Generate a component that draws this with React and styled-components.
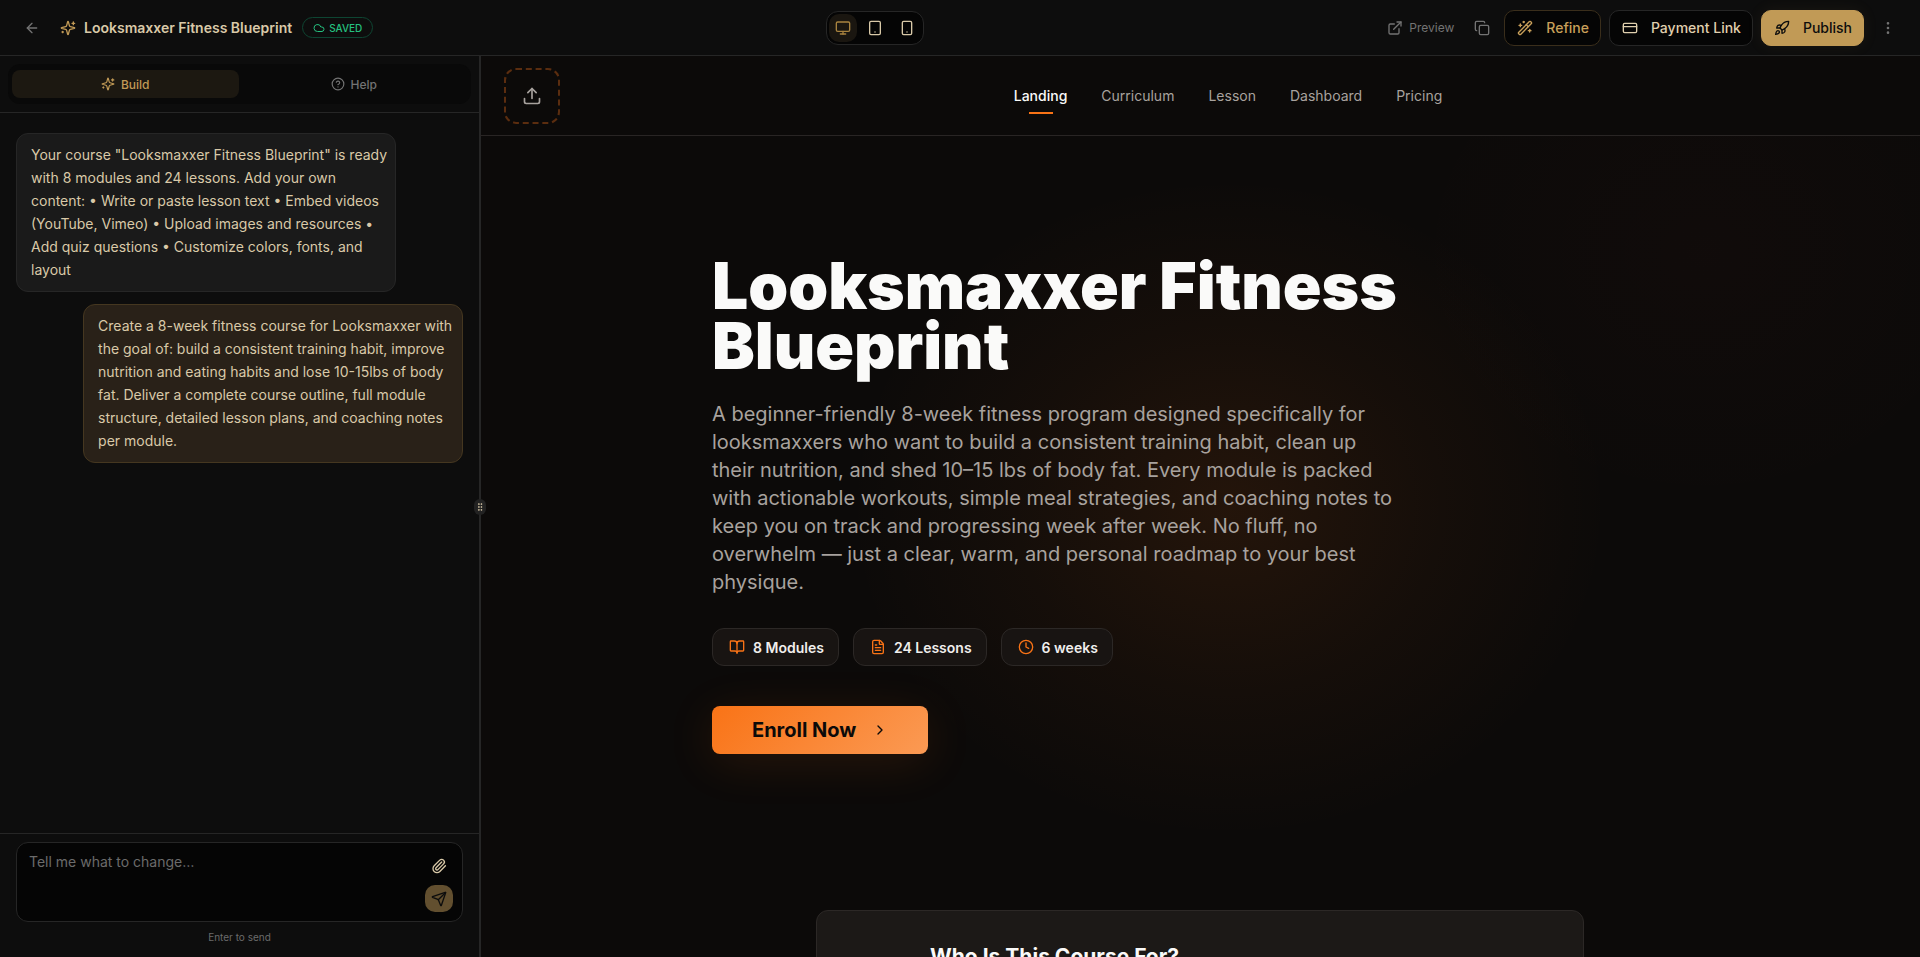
import React from 'react'
import styled, { createGlobalStyle } from 'styled-components'
import {
    ArrowLeft, Cloud, Monitor, Tablet, Smartphone, ExternalLink, Copy, WandSparkles,
    CreditCard, Rocket, EllipsisVertical, CircleQuestionMark, Paperclip, Send,
    Upload, BookOpen, FileText, Clock, ChevronRight, GripVertical
} from 'lucide-react'

const GlobalStyle = createGlobalStyle`
    *, *::before, *::after {
        box-sizing: border-box;
    }
    body {
        margin: 0;
        background: #050505;
        color: #d9c9a8;
        font-family: Inter, "Liberation Sans", sans-serif;
        font-size: 14px;
    }
    button, textarea {
        font: inherit;
        color: inherit;
    }
    h1, h2, p {
        margin: 0;
    }
`

const Page = styled.div`
    height: 100vh;
    display: flex;
    flex-direction: column;
    overflow: hidden;
`

/* top bar */

const TopBar = styled.header`
    display: flex;
    align-items: center;
    justify-content: space-between;
    flex: none;
    height: 56px;
    padding: 0 16px;
    background: #0d0d0d;
    border-bottom: 1px solid #262626;
`

const BarGroup = styled.div`
    display: flex;
    align-items: center;
    gap: 8px;
`

const IconButton = styled.button`
    display: flex;
    align-items: center;
    justify-content: center;
    width: ${({ $size }) => $size || 32}px;
    height: ${({ $size }) => $size || 32}px;
    padding: 0;
    border: 0;
    border-radius: 10px;
    background: ${({ $active }) => ($active ? '#1a1610' : 'transparent')};
    color: ${({ $active, $bright }) => ($active ? '#a8833f' : $bright ? '#d9c9a8' : '#737373')};
    cursor: pointer;
`

const ProjectName = styled.div`
    display: flex;
    align-items: center;
    gap: 8px;
    margin-left: 4px;
    font-weight: 600;
    svg {
        color: #c19a56;
    }
`

const SavedBadge = styled.span`
    display: flex;
    align-items: center;
    gap: 4px;
    height: 21px;
    margin-left: 2px;
    padding: 0 10px;
    border: 1px solid #0d4532;
    border-radius: 11px;
    color: #25c07f;
    font-size: 10px;
    font-weight: 500;
`

const DeviceSwitch = styled.div`
    display: flex;
    gap: 4px;
    padding: 2px;
    border: 1px solid #262626;
    border-radius: 12px;
    background: #050505;
`

const PreviewLink = styled.a`
    display: flex;
    align-items: center;
    gap: 6px;
    padding: 0 6px 0 10px;
    color: #737373;
    font-size: 12px;
    text-decoration: none;
`

const tones = {
    gold: { bg: '#050505', border: '#3a2e1b', color: '#c9a05a' },
    plain: { bg: '#050505', border: '#262626', color: '#e0d0ae' },
    solid: { bg: '#c19a56', border: '#c19a56', color: '#0d0d0d' }
}

const ActionButton = styled.button`
    display: flex;
    align-items: center;
    gap: 13px;
    height: 36px;
    padding: 0 11px 0 12px;
    border: 1px solid ${({ $tone }) => tones[$tone].border};
    border-radius: 10px;
    background: ${({ $tone }) => tones[$tone].bg};
    color: ${({ $tone }) => tones[$tone].color};
    box-shadow: ${({ $tone }) => ($tone === 'solid' ? '0 0 16px rgba(193,154,86,0.08)' : 'none')};
    font-weight: 500;
    cursor: pointer;
`

/* chat column */

const Workspace = styled.div`
    display: flex;
    flex: 1;
    min-height: 0;
`

const Sidebar = styled.aside`
    position: relative;
    display: flex;
    flex-direction: column;
    flex: 0 0 25%;
    min-width: 0;
    background: #0d0d0d;
    border-right: 1px solid #262626;
`

const ResizeHandle = styled.button`
    position: absolute;
    top: 50%;
    right: -7px;
    z-index: 1;
    display: flex;
    align-items: center;
    justify-content: center;
    width: 12px;
    height: 16px;
    margin-top: -8px;
    padding: 0;
    border: 0;
    border-radius: 6px;
    background: #222222;
    cursor: col-resize;
`

const TabsWrap = styled.div`
    padding: 8px;
    border-bottom: 1px solid #262626;
`

const Tabs = styled.div`
    display: grid;
    grid-template-columns: 1fr 1fr;
    gap: 2px;
    padding: 6px 4px;
    border-radius: 12px;
    background: #090909;
`

const Tab = styled.button`
    display: flex;
    align-items: center;
    justify-content: center;
    gap: 6px;
    height: 28px;
    padding: 0;
    border: 0;
    border-radius: 8px;
    background: ${({ $active }) => ($active ? '#1c1811' : 'transparent')};
    color: ${({ $active }) => ($active ? '#c19a56' : '#737373')};
    font-size: 12px;
    font-weight: 500;
    cursor: pointer;
`

const Messages = styled.div`
    display: flex;
    flex-direction: column;
    flex: 1;
    gap: 12px;
    min-height: 0;
    padding: 20px 16px;
    overflow: hidden;
`

const Bubble = styled.p`
    width: 85%;
    align-self: ${({ $mine }) => ($mine ? 'flex-end' : 'flex-start')};
    padding: 9px 6px 10px 14px;
    border: 1px solid ${({ $mine }) => ($mine ? '#453720' : '#262626')};
    border-radius: 12px;
    background: ${({ $mine }) => ($mine ? '#292118' : '#1a1a1a')};
    font-size: 14px;
    line-height: 23px;
`

const Composer = styled.form`
    padding: 8px 16px 12px;
    border-top: 1px solid #262626;
`

const InputBox = styled.div`
    display: flex;
    height: 80px;
    border: 1px solid #262626;
    border-radius: 12px;
    background: #050505;
`

const MessageInput = styled.textarea`
    flex: 1;
    min-width: 0;
    padding: 8px 12px;
    border: 0;
    outline: 0;
    resize: none;
    background: transparent;
    line-height: 21px;
    &::placeholder {
        color: #6b6b6b;
    }
`

const InputActions = styled.div`
    display: flex;
    flex-direction: column;
    gap: 6px;
    padding: 9px;
`

const SendButton = styled(IconButton)`
    background: #624f2f;
    color: #0d0d0d;
`

const Hint = styled.p`
    margin-top: 8px;
    color: #6b6b6b;
    font-size: 10px;
    line-height: 15px;
    text-align: center;
`

/* course preview */

const Preview = styled.main`
    display: flex;
    flex-direction: column;
    flex: 1;
    min-width: 0;
    overflow: hidden;
    background: #0c0a09;
    box-shadow: inset 1px 0 #262626;
`

const CourseNav = styled.nav`
    display: flex;
    align-items: center;
    flex: none;
    height: 80px;
    padding: 0 24px;
    border-bottom: 1px solid #292524;
`

const LogoUpload = styled.button`
    display: flex;
    align-items: center;
    justify-content: center;
    width: 56px;
    height: 56px;
    padding: 0;
    border: 2px dashed #5b2d0f;
    border-radius: 12px;
    background: transparent;
    color: #a8a29e;
    cursor: pointer;
`

const NavLinks = styled.div`
    display: flex;
    justify-content: center;
    flex: 1;
    gap: 34px;
`

const NavLink = styled.a`
    position: relative;
    padding: 8px 0;
    color: ${({ $active }) => ($active ? '#fafaf9' : '#a8a29e')};
    font-weight: ${({ $active }) => ($active ? 500 : 400)};
    line-height: 20px;
    text-decoration: none;
    &::after {
        content: '';
        display: ${({ $active }) => ($active ? 'block' : 'none')};
        position: absolute;
        bottom: 0;
        left: 50%;
        width: 24px;
        height: 2px;
        margin-left: -12px;
        background: #f97316;
    }
`

const Hero = styled.section`
    flex: none;
    padding: 120px 24px 156px;
    background:
        radial-gradient(380px 330px at 52% 48%, rgba(249,115,22,0.1), rgba(249,115,22,0.04) 55%, transparent),
        radial-gradient(300px 260px at 85% 15%, rgba(239,68,68,0.02), transparent);
`

const HeroInner = styled.div`
    max-width: 976px;
    margin: 0 auto;
`

const Title = styled.h1`
    max-width: 768px;
    color: #fafaf9;
    font-size: 64px;
    font-weight: 900;
    line-height: 60px;
`

const Lead = styled.p`
    max-width: 684px;
    margin-top: 24px;
    color: #a8a29e;
    font-size: 20px;
    line-height: 28px;
`

const Stats = styled.div`
    display: flex;
    gap: 14px;
    margin: 32px 0 40px;
`

const Stat = styled.div`
    display: flex;
    align-items: center;
    gap: 8px;
    height: 38px;
    padding: 0 14px 0 16px;
    border: 1px solid #2c2826;
    border-radius: 12px;
    background: #181412;
    color: #f0eeec;
    font-weight: 600;
    svg {
        color: #f97316;
    }
`

const EnrollButton = styled.button`
    display: flex;
    align-items: center;
    gap: 16px;
    height: 48px;
    padding: 0 40px;
    border: 0;
    border-radius: 8px;
    background: linear-gradient(135deg, #f97316, #fb9a54);
    box-shadow: 0 8px 48px rgba(249,115,22,0.12);
    color: #0c0a09;
    font-size: 20px;
    font-weight: 700;
    cursor: pointer;
`

const Audience = styled.section`
    flex: none;
    width: 100%;
    max-width: 768px;
    margin: 0 auto;
    padding: 32px;
    border: 1px solid #2c2826;
    border-radius: 12px;
    background: #1c1917;
`

const AudienceTitle = styled.h2`
    max-width: 540px;
    margin: 0 auto;
    color: #fafaf9;
    font-size: 21px;
    font-weight: 700;
    line-height: 28px;
`

const Sparkles = ({ size }) => (
    <svg width={size} height={size} viewBox="0 0 24 24" fill="none" stroke="currentColor" strokeWidth="2" strokeLinecap="round" strokeLinejoin="round" aria-hidden="true">
        <path d="M9.937 15.5A2 2 0 0 0 8.5 14.063l-6.135-1.582a.5.5 0 0 1 0-.962L8.5 9.936A2 2 0 0 0 9.937 8.5l1.582-6.135a.5.5 0 0 1 .963 0L14.063 8.5A2 2 0 0 0 15.5 9.937l6.135 1.581a.5.5 0 0 1 0 .964L15.5 14.063a2 2 0 0 0-1.437 1.437l-1.582 6.135a.5.5 0 0 1-.963 0z" />
        <path d="M20 3v4M22 5h-4M4 17v2M5 18H3" />
    </svg>
)

const navItems = ['Landing', 'Curriculum', 'Lesson', 'Dashboard', 'Pricing']

const stats = [
    { icon: BookOpen, label: '8 Modules' },
    { icon: FileText, label: '24 Lessons' },
    { icon: Clock, label: '6 weeks' }
]

const messages = [
    {
        text: 'Your course "Looksmaxxer Fitness Blueprint" is ready with 8 modules and 24 lessons. Add your own content: • Write or paste lesson text • Embed videos (YouTube, Vimeo) • Upload images and resources • Add quiz questions • Customize colors, fonts, and layout'
    },
    {
        mine: true,
        text: 'Create a 8-week fitness course for Looksmaxxer with the goal of: build a consistent training habit, improve nutrition and eating habits and lose 10-15lbs of body fat. Deliver a complete course outline, full module structure, detailed lesson plans, and coaching notes per module.'
    }
]

const Header = () => (
    <TopBar>
        <BarGroup>
            <IconButton aria-label="Back"><ArrowLeft size={16} /></IconButton>
            <ProjectName><Sparkles size={16} />Looksmaxxer Fitness Blueprint</ProjectName>
            <SavedBadge><Cloud size={12} />SAVED</SavedBadge>
        </BarGroup>
        <DeviceSwitch>
            <IconButton $size={28} $active aria-label="Desktop"><Monitor size={16} /></IconButton>
            <IconButton $size={28} $bright aria-label="Tablet"><Tablet size={16} /></IconButton>
            <IconButton $size={28} $bright aria-label="Phone"><Smartphone size={16} /></IconButton>
        </DeviceSwitch>
        <BarGroup>
            <PreviewLink href="#preview"><ExternalLink size={16} />Preview</PreviewLink>
            <IconButton $size={28} aria-label="Copy"><Copy size={16} /></IconButton>
            <ActionButton $tone="gold"><WandSparkles size={16} />Refine</ActionButton>
            <ActionButton $tone="plain"><CreditCard size={16} />Payment Link</ActionButton>
            <ActionButton $tone="solid"><Rocket size={16} />Publish</ActionButton>
            <IconButton aria-label="More"><EllipsisVertical size={16} /></IconButton>
        </BarGroup>
    </TopBar>
)

const Chat = () => (
    <Sidebar>
        <TabsWrap>
            <Tabs>
                <Tab $active><Sparkles size={14} />Build</Tab>
                <Tab><CircleQuestionMark size={14} />Help</Tab>
            </Tabs>
        </TabsWrap>
        <Messages>
            {messages.map((m) => <Bubble key={m.text} $mine={m.mine}>{m.text}</Bubble>)}
        </Messages>
        <Composer>
            <InputBox>
                <MessageInput aria-label="Message" placeholder="Tell me what to change…" />
                <InputActions>
                    <IconButton type="button" $size={28} $bright aria-label="Attach file"><Paperclip size={16} /></IconButton>
                    <SendButton type="button" $size={28} aria-label="Send"><Send size={16} /></SendButton>
                </InputActions>
            </InputBox>
            <Hint>Enter to send</Hint>
        </Composer>
        <ResizeHandle aria-label="Resize panel"><GripVertical size={10} /></ResizeHandle>
    </Sidebar>
)

const Course = () => (
    <Preview>
        <CourseNav>
            <LogoUpload aria-label="Upload logo"><Upload size={20} /></LogoUpload>
            <NavLinks>
                {navItems.map((item, i) => <NavLink key={item} href={`#${item.toLowerCase()}`} $active={i === 0}>{item}</NavLink>)}
            </NavLinks>
        </CourseNav>
        <Hero>
            <HeroInner>
                <Title>Looksmaxxer Fitness Blueprint</Title>
                <Lead>
                    A beginner-friendly 8-week fitness program designed specifically for looksmaxxers who want
                    to build a consistent training habit, clean up their nutrition, and shed 10–15 lbs of body
                    fat. Every module is packed with actionable workouts, simple meal strategies, and coaching
                    notes to keep you on track and progressing week after week. No fluff, no overwhelm — just a
                    clear, warm, and personal roadmap to your best physique.
                </Lead>
                <Stats>
                    {stats.map(({ icon: Icon, label }) => <Stat key={label}><Icon size={16} />{label}</Stat>)}
                </Stats>
                <EnrollButton>Enroll Now<ChevronRight size={16} /></EnrollButton>
            </HeroInner>
        </Hero>
        <Audience>
            <AudienceTitle>Who Is This Course For?</AudienceTitle>
        </Audience>
    </Preview>
)

const App = () => (
    <Page>
        <GlobalStyle />
        <Header />
        <Workspace>
            <Chat />
            <Course />
        </Workspace>
    </Page>
)

export default App
